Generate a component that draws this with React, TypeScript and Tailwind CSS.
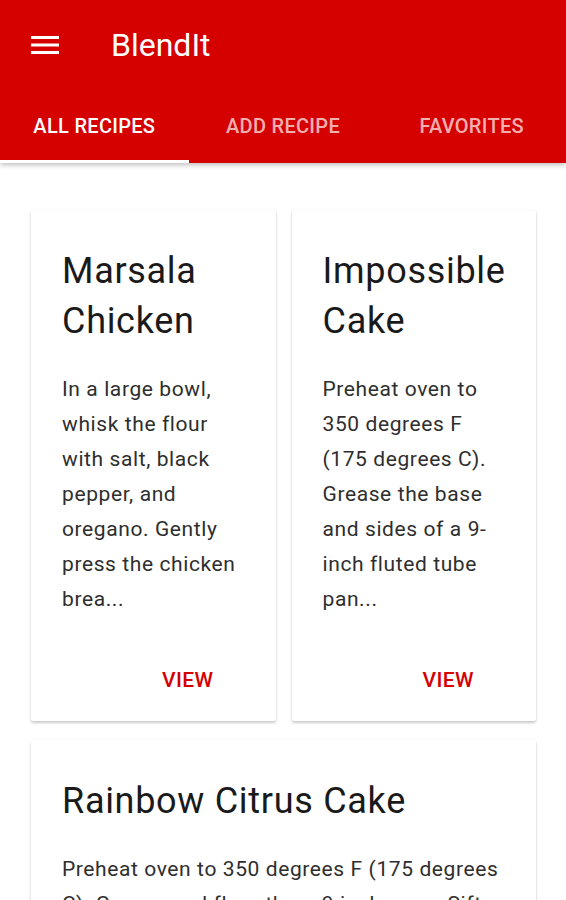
import { useState } from "react";

const recipes = [
  {
    title: "Marsala Chicken",
    body: "In a large bowl, whisk the flour with salt, black pepper, and oregano. Gently press the chicken brea...",
  },
  {
    title: "Impossible Cake",
    body: "Preheat oven to 350 degrees F (175 degrees C). Grease the base and sides of a 9-inch fluted tube pan...",
  },
  {
    title: "Rainbow Citrus Cake",
    body: "Preheat oven to 350 degrees F (175 degrees C). Grease and flour three 9 inch pans. Sift together the flour, baking soda and salt...",
  },
];

const tabs = ["All Recipes", "Add Recipe", "Favorites"];

const RecipeCard = ({ title, body, wide }: { title: string; body: string; wide?: boolean }) => (
  <div
    className={`flex flex-col rounded-[2px] bg-white shadow-[0_2px_3px_rgba(0,0,0,0.2),0_0_2px_rgba(0,0,0,0.07)] ${
      wide ? "col-span-2" : ""
    }`}
  >
    <div className="pl-[31px] pr-[28px] pt-[36px]">
      <h2 className="text-[36px] leading-[50px] tracking-[0.7px] text-[#1a1a1a]">{title}</h2>
      <p className="mt-[26px] text-[21px] leading-[35px] tracking-[0.6px] text-[#2e2e2e]">{body}</p>
    </div>
    {!wide && (
      <div className="mt-auto flex justify-end pb-[28px] pr-[62px] pt-[50px]">
        <button className="text-[21px] font-medium leading-[26px] tracking-[0.4px] text-[#d50000]">VIEW</button>
      </div>
    )}
  </div>
);

const App = () => {
  const [active, setActive] = useState(0);

  return (
    <div className="h-[900px] overflow-hidden bg-white" style={{ fontFamily: "Roboto, 'Noto Sans', sans-serif" }}>
      {/* App bar */}
      <header className="relative z-10 bg-[#d50000] shadow-[0_2px_5px_rgba(0,0,0,0.25)]">
        <div className="flex h-[90px] items-center pl-[31px]">
          <svg width="28" height="20" viewBox="0 0 28 20" className="text-white">
            <rect x="0" y="1" width="28" height="3" fill="currentColor" />
            <rect x="0" y="8.5" width="28" height="3" fill="currentColor" />
            <rect x="0" y="16" width="28" height="3" fill="currentColor" />
          </svg>
          <h1 className="ml-[52px] text-[32px] leading-none text-white">BlendIt</h1>
        </div>
        <nav className="grid h-[73px] grid-cols-3">
          {tabs.map((t, i) => (
            <button
              key={t}
              onClick={() => setActive(i)}
              className={`relative flex items-center justify-center pb-[2px] text-[20px] font-medium uppercase tracking-[0.3px] ${
                active === i ? "text-white" : "text-white/70"
              }`}
            >
              {t}
              {active === i && <span className="absolute inset-x-0 bottom-0 h-[3px] bg-white" />}
            </button>
          ))}
        </nav>
      </header>

      {/* Recipes */}
      <main className="grid grid-cols-2 gap-x-[16px] gap-y-[19px] pl-[31px] pr-[30px] pt-[47px]">
        {recipes.map((r, i) => (
          <RecipeCard key={r.title} title={r.title} body={r.body} wide={i === 2} />
        ))}
      </main>
    </div>
  );
};

export default App;
